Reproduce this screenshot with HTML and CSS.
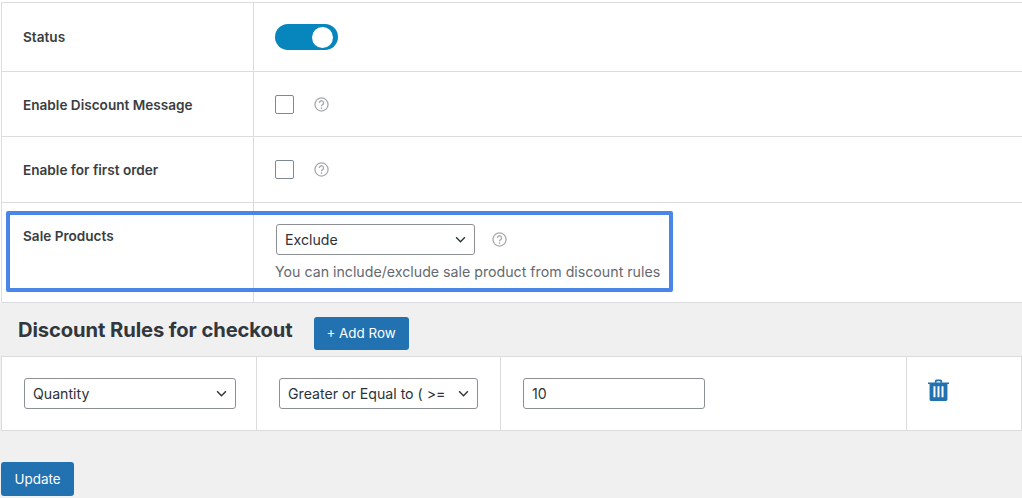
FILE: index.html
```html
<!DOCTYPE html>
<html lang="en">
<head>
  <meta charset="UTF-8">
  <title>Discount Rules</title>
  <meta name="viewport" content="width=device-width, initial-scale=1.0">
  <link rel="stylesheet" href="styles.css">
</head>
<body>
  <div class="settings">
    <table class="form-table">
      <tr class="row-status">
        <th><span class="label">Status</span></th>
        <td><span class="toggle"><span class="knob"></span></span></td>
      </tr>
      <tr class="row-message">
        <th><span class="label">Enable Discount Message</span></th>
        <td>
          <div class="field">
            <span class="check"></span>
            <svg class="help" viewBox="0 0 16 16"><circle cx="8" cy="8" r="7"/><path d="M5.800 6.300a2.200 2.200 0 1 1 3.400 1.800c-.8.5-1.200.9-1.200 1.800"/><circle class="dot" cx="8" cy="11.800" r=".9"/></svg>
          </div>
        </td>
      </tr>
      <tr class="row-first">
        <th><span class="label">Enable for first order</span></th>
        <td>
          <div class="field">
            <span class="check"></span>
            <svg class="help" viewBox="0 0 16 16"><circle cx="8" cy="8" r="7"/><path d="M5.800 6.300a2.200 2.200 0 1 1 3.400 1.800c-.8.5-1.200.9-1.200 1.800"/><circle class="dot" cx="8" cy="11.800" r=".9"/></svg>
          </div>
        </td>
      </tr>
      <tr class="row-sale">
        <th><span class="label">Sale Products</span></th>
        <td>
          <div class="field field-sale">
            <span class="select select-sale">Exclude
              <svg class="chev" viewBox="0 0 12 8"><path d="M1 1.500l5 5 5-5"/></svg>
            </span>
            <svg class="help" viewBox="0 0 16 16"><circle cx="8" cy="8" r="7"/><path d="M5.800 6.300a2.200 2.200 0 1 1 3.400 1.800c-.8.5-1.200.9-1.200 1.800"/><circle class="dot" cx="8" cy="11.800" r=".9"/></svg>
          </div>
          <p class="desc">You can include/exclude sale product from discount rules</p>
        </td>
      </tr>
    </table>
    <div class="highlight"></div>
  </div>

  <div class="rules-head">
    <h2>Discount Rules for checkout</h2>
    <button class="btn btn-add">+ Add Row</button>
  </div>

  <table class="rules-table">
    <tr>
      <td class="col-type">
        <span class="select select-type">Quantity
          <svg class="chev" viewBox="0 0 12 8"><path d="M1 1.500l5 5 5-5"/></svg>
        </span>
      </td>
      <td class="col-op">
        <span class="select select-op">Greater or Equal to ( &gt;=
          <svg class="chev" viewBox="0 0 12 8"><path d="M1 1.500l5 5 5-5"/></svg>
        </span>
      </td>
      <td class="col-val"><span class="input">10</span></td>
      <td class="col-del">
        <svg class="trash" viewBox="0 0 20 22"><path d="M6.500 4V2.800C6.500 1.800 7.200 1 8.200 1h3.600c1 0 1.700.8 1.700 1.800V4h-1.700V2.800a.2.2 0 0 0-.2-.2H8.400a.2.2 0 0 0-.2.2V4z"/><path fill-rule="evenodd" d="M0 3.800h20v1.500h-1.500v14.500c0 1-.8 1.700-1.700 1.700H3.200c-1 0-1.700-.7-1.700-1.700V5.300H0zM5.200 7.500v10.500h1.900V7.500zM9.050 7.500v10.500h1.900V7.500zM12.900 7.500v10.500h1.900V7.500z"/></svg>
      </td>
    </tr>
  </table>

  <button class="btn btn-update">Update</button>
</body>
</html>
```

FILE: styles.css
```css
* {
  box-sizing: border-box;
}
body {
  margin: 0;
  height: 498px;
  overflow: hidden;
  background-color: #f0f0f1;
  font-family: Inter, "Noto Sans", sans-serif;
  color: #3c434a;
  font-size: 14px;
}
table {
  border-collapse: collapse;
  background-color: #fff;
}
th, td {
  border: 1px solid #dcdcde;
  padding: 0;
}
.settings {
  position: relative;
  padding: 2px 0 0 1px;
  background-color: #fff;
}
.form-table {
  width: 1022px;
  table-layout: fixed;
}
.form-table th {
  width: 252px;
  padding: 0 0 0 21px;
  text-align: left;
  font-size: 13.6px;
  font-weight: 600;
  color: #3a3d41;
}
.label {
  display: block;
}
.row-message .label {
  margin-top: 1px;
}
.form-table td {
  padding-left: 21px;
}
.row-status {
  height: 69px;
}
.row-message {
  height: 65px;
}
.row-first {
  height: 66px;
}
.row-sale {
  height: 100px;
}
.row-sale th {
  vertical-align: top;
  padding-top: 25px;
}
.row-sale td {
  vertical-align: top;
  padding-top: 21px;
  padding-left: 22px;
}
.toggle {
  display: block;
  position: relative;
  width: 63px;
  height: 26px;
  border-radius: 13px;
  background-color: #0785bd;
}
.knob {
  position: absolute;
  top: 3px;
  right: 5px;
  width: 21px;
  height: 21px;
  border-radius: 50%;
  background-color: #fff;
}
.field {
  display: flex;
  align-items: center;
  gap: 20px;
}
.check {
  width: 19px;
  height: 19px;
  border: 1px solid #7e8993;
  border-radius: 2px;
  background-color: #fff;
}
.help {
  width: 15px;
  height: 15px;
  fill: none;
  stroke: #a7aaad;
  stroke-width: 1.4;
}
.help .dot {
  fill: #a7aaad;
  stroke: none;
}
.select, .input {
  display: flex;
  align-items: center;
  height: 31px;
  padding-left: 8px;
  border: 1px solid #8c8f94;
  border-radius: 3px;
  background-color: #fff;
  font-size: 14.15px;
  color: #2c3338;
}
.select {
  position: relative;
}
.chev {
  position: absolute;
  right: 8px;
  top: 11px;
  width: 11px;
  height: 7px;
  fill: none;
  stroke: #2c3338;
  stroke-width: 1.6;
}
.select-sale {
  width: 199px;
}
.field-sale {
  gap: 17px;
}
.desc {
  margin: 6px 0 0 -1px;
  font-size: 14.2px;
  line-height: 22px;
  color: #646970;
}
.highlight {
  position: absolute;
  left: 6px;
  top: 211px;
  width: 667px;
  height: 81px;
  border: 4px solid #4a86e8;
  border-radius: 2px;
}
.rules-head {
  display: flex;
  align-items: center;
  height: 53px;
  padding-left: 18px;
  gap: 21px;
  background-color: #f0f0f1;
}
.rules-head h2 {
  margin: 0;
  font-size: 20.2px;
  font-weight: 700;
  letter-spacing: -0.1px;
  color: #32373c;
}
.btn {
  border: none;
  border-radius: 3px;
  background-color: #2271b1;
  color: #fff;
  font-family: inherit;
  font-size: 13.4px;
}
.btn-add {
  width: 95px;
  height: 33px;
  margin-top: 8px;
  padding-bottom: 3px;
}
.rules-table {
  width: 1021px;
  margin-left: 1px;
  table-layout: fixed;
}
.rules-table td {
  height: 74px;
}
.col-type {
  width: 255px;
  padding-left: 22px !important;
}
.col-op {
  width: 244px;
  padding-left: 22px !important;
}
.col-val {
  width: 406px;
  padding-left: 22px !important;
}
.select-type {
  width: 212px;
}
.select-op {
  width: 199px;
}
.input {
  width: 182px;
}
.col-del {
  padding-left: 21px !important;
}
.trash {
  display: block;
  width: 21px;
  height: 24px;
  margin-top: -8px;
  fill: #2271b1;
}
.btn-update {
  display: block;
  width: 73px;
  height: 34px;
  margin: 31px 0 0 1px;
}
```
